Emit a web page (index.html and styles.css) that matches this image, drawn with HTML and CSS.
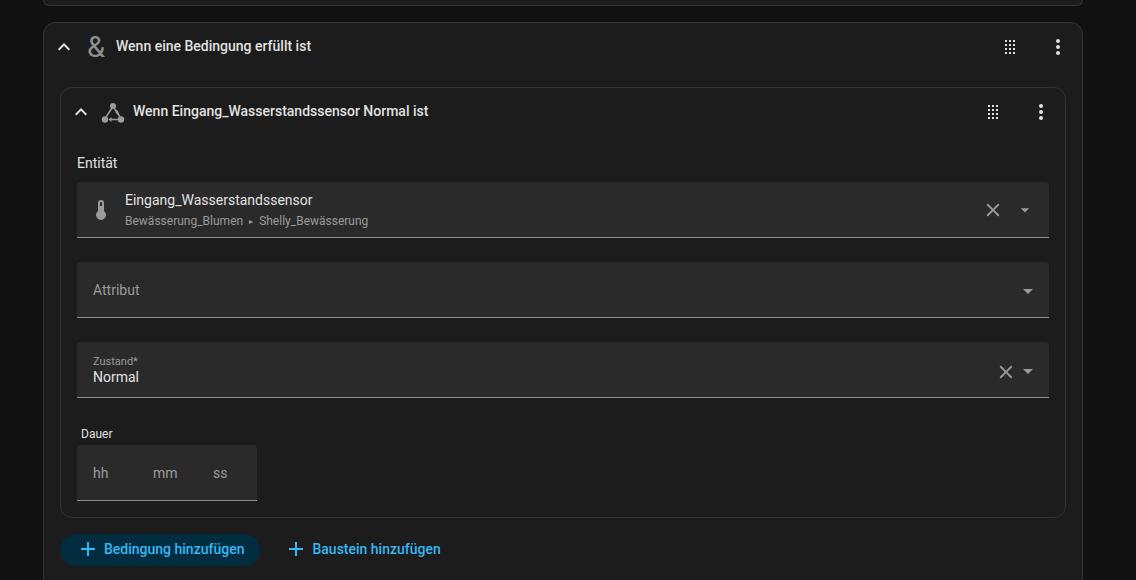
FILE: index.html
```html
<!DOCTYPE html>
<html lang="de">
<head>
<meta charset="utf-8">
<title>Bedingung</title>
<link rel="stylesheet" href="styles.css">
</head>
<body>
<main class="page">
  <div class="card card-stub"></div>
  <section class="card card-outer">
    <header class="head">
      <svg class="ico chev" viewBox="0 0 24 24"><path d="M7.41,15.41L12,10.83L16.59,15.41L18,14L12,8L6,14L7.41,15.41Z"/></svg>
      <span class="amp">&amp;</span>
      <h2 class="title">Wenn eine Bedingung erfüllt ist</h2>
      <svg class="ico drag" viewBox="0 0 24 24"><path d="M7,19V17H9V19H7M11,19V17H13V19H11M15,19V17H17V19H15M7,15V13H9V15H7M11,15V13H13V15H11M15,15V13H17V15H15M7,11V9H9V11H7M11,11V9H13V11H11M15,11V9H17V11H15M7,7V5H9V7H7M11,7V5H13V7H11M15,7V5H17V7H15Z"/></svg>
      <svg class="ico dots" viewBox="0 0 24 24"><path d="M12,16A2,2 0 0,1 14,18A2,2 0 0,1 12,20A2,2 0 0,1 10,18A2,2 0 0,1 12,16M12,10A2,2 0 0,1 14,12A2,2 0 0,1 12,14A2,2 0 0,1 10,12A2,2 0 0,1 12,10M12,4A2,2 0 0,1 14,6A2,2 0 0,1 12,8A2,2 0 0,1 10,6A2,2 0 0,1 12,4Z"/></svg>
    </header>
    <div class="outer-body">
      <section class="card card-inner">
        <header class="head head-inner">
          <svg class="ico chev" viewBox="0 0 24 24"><path d="M7.41,15.41L12,10.83L16.59,15.41L18,14L12,8L6,14L7.41,15.41Z"/></svg>
          <svg class="ico state" viewBox="0 0 24 24">
            <circle cx="12" cy="6" r="3"/><circle cx="4" cy="19.5" r="3.2"/><circle cx="20" cy="19.5" r="3.2"/>
            <path class="state-line" d="M11 8 5 17M13 8 19 17M8.5 19.5H17"/>
            <path d="M7.5 19.5 10.5 17V22ZM15 9.5 17 11 18.5 16 14.5 12.5Z"/>
          </svg>
          <h3 class="title">Wenn Eingang_Wasserstandssensor Normal ist</h3>
          <svg class="ico drag" viewBox="0 0 24 24"><path d="M7,19V17H9V19H7M11,19V17H13V19H11M15,19V17H17V19H15M7,15V13H9V15H7M11,15V13H13V15H11M15,15V13H17V15H15M7,11V9H9V11H7M11,11V9H13V11H11M15,11V9H17V11H15M7,7V5H9V7H7M11,7V5H13V7H11M15,7V5H17V7H15Z"/></svg>
          <svg class="ico dots" viewBox="0 0 24 24"><path d="M12,16A2,2 0 0,1 14,18A2,2 0 0,1 12,20A2,2 0 0,1 10,18A2,2 0 0,1 12,16M12,10A2,2 0 0,1 14,12A2,2 0 0,1 12,14A2,2 0 0,1 10,12A2,2 0 0,1 12,10M12,4A2,2 0 0,1 14,6A2,2 0 0,1 12,8A2,2 0 0,1 10,6A2,2 0 0,1 12,4Z"/></svg>
        </header>
        <div class="form">
          <div class="entity-label">Entität</div>
          <div class="field field-entity">
            <svg class="ico thermo" viewBox="0 0 24 24"><path d="M15 13V5A3 3 0 0 0 9 5V13A5 5 0 1 0 15 13M12 4A1 1 0 0 1 13 5V8H11V5A1 1 0 0 1 12 4Z"/></svg>
            <div class="entity-text">
              <div class="entity-name">Eingang_Wasserstandssensor</div>
              <div class="entity-path">Bewässerung_Blumen<span class="sep">▸</span>Shelly_Bewässerung</div>
            </div>
            <svg class="ico clear clear-entity" viewBox="0 0 24 24"><path d="M19,6.41L17.59,5L12,10.59L6.41,5L5,6.41L10.59,12L5,17.59L6.41,19L12,13.41L17.59,19L19,17.59L13.41,12L19,6.41Z"/></svg>
            <svg class="ico caret caret-small" viewBox="0 0 24 24"><path d="M7,10L12,15L17,10H7Z"/></svg>
          </div>
          <div class="field field-text">
            <span class="placeholder">Attribut</span>
            <svg class="ico caret caret-low" viewBox="0 0 24 24"><path d="M7,10L12,15L17,10H7Z"/></svg>
          </div>
          <div class="field field-text">
            <div class="value-wrap">
              <div class="float-label">Zustand*</div>
              <div class="value">Normal</div>
            </div>
            <svg class="ico clear clear-low" viewBox="0 0 24 24"><path d="M19,6.41L17.59,5L12,10.59L6.41,5L5,6.41L10.59,12L5,17.59L6.41,19L12,13.41L17.59,19L19,17.59L13.41,12L19,6.41Z"/></svg>
            <svg class="ico caret caret-low" viewBox="0 0 24 24"><path d="M7,10L12,15L17,10H7Z"/></svg>
          </div>
          <div class="dur-label">Dauer</div>
          <div class="duration">
            <span class="dur-h">hh</span><span class="dur-m">mm</span><span class="dur-s">ss</span>
          </div>
        </div>
      </section>
      <footer class="actions">
        <button class="btn btn-tonal"><svg class="ico plus" viewBox="0 0 24 24"><path d="M19,13H13V19H11V13H5V11H11V5H13V11H19V13Z"/></svg>Bedingung hinzufügen</button>
        <button class="btn"><svg class="ico plus" viewBox="0 0 24 24"><path d="M19,13H13V19H11V13H5V11H11V5H13V11H19V13Z"/></svg>Baustein hinzufügen</button>
      </footer>
    </div>
  </section>
</main>
</body>
</html>
```
FILE: styles.css
```css
* { box-sizing: border-box; }
html, body { margin: 0; height: 580px; overflow: hidden; }
body { background: #111111; font-family: Roboto, sans-serif; color: #e1e1e1; }
.page { width: 1040px; margin-left: 43px; height: 580px; overflow: hidden; }
.card { background: #1c1c1c; border: 1px solid #333333; border-radius: 12px; }
.card-stub { height: 6px; border-top: 0; border-radius: 0 0 12px 12px; margin-bottom: 16px; }
.card-outer { height: 600px; }
.ico { display: block; flex: none; width: 24px; height: 24px; fill: #e1e1e1; }
.head { display: flex; align-items: center; height: 48px; padding: 0 12px 0 8px; }
.head-inner { height: 48px; }
.title { margin: 0 0 2px; font-size: 14px; line-height: 20px; font-weight: 500; color: #e1e1e1; flex: 1; }
.chev { margin-right: 8px; }
.amp { width: 32px; margin: 0 4px 0 -4px; font-family: Roboto, sans-serif; font-size: 29px; font-weight: 400; line-height: 24px; color: #8f8f8f; text-align: center; }
.drag { margin-right: 24px; }
.outer-body { padding: 16px 16px 0; }
.card-inner { height: 431px; }
.state { margin-right: 8px; fill: #9b9b9b; }
.state-line { fill: none; stroke: #9b9b9b; stroke-width: 1.5; }
.form { padding: 16px 16px 0; }
.entity-label { height: 30px; padding-top: 1px; font-size: 14px; line-height: 20px; color: #e1e1e1; }
.field { display: flex; align-items: center; height: 56px; background: #2a2a2a; border-bottom: 1px solid #8f8f8f; border-radius: 4px 4px 0 0; margin-bottom: 24px; }
.field-entity { padding: 0 14px 0 12px; }
.field-text { padding: 0 9px 0 16px; }
.thermo { fill: #9b9b9b; margin-right: 12px; }
.entity-text { flex: 1; min-width: 0; padding-top: 2px; }
.entity-name { font-size: 14px; line-height: 20px; color: #e1e1e1; }
.entity-path { font-size: 12px; line-height: 20px; color: #9b9b9b; margin-top: 1px; }
.sep { font-size: 8px; margin: 0 6px; vertical-align: 1px; }
.clear { width: 22px; height: 22px; fill: #9b9b9b; }
.clear-entity { margin-right: 11px; }
.clear-low { margin-top: 4px; margin-right: -1px; }
.caret { fill: #9b9b9b; }
.caret-small { width: 20px; height: 20px; }
.caret-low { margin-top: 2px; }
.placeholder { flex: 1; font-size: 14px; color: #9b9b9b; }
.value-wrap { flex: 1; padding-top: 3px; }
.float-label { font-size: 11px; line-height: 12px; color: #9b9b9b; }
.value { font-size: 14px; line-height: 18px; color: #e1e1e1; }
.dur-label { height: 23px; margin-top: 12px; padding: 4px 0 0 4px; font-size: 12px; line-height: 16px; color: #e1e1e1; }
.duration { display: flex; align-items: center; width: 180px; height: 56px; background: #2a2a2a; border-bottom: 1px solid #8f8f8f; border-radius: 4px 4px 0 0; padding-left: 16px; font-size: 14px; color: #9b9b9b; }
.dur-h { width: 60px; }
.dur-m { width: 60px; }
.actions { display: flex; align-items: center; gap: 8px; margin-top: 16px; }
.btn { display: inline-flex; align-items: center; height: 32px; padding: 0 16px 2px; border: 0; border-radius: 16px; background: transparent; color: #35b9f3; font: 500 14px/20px Roboto, sans-serif; }
.btn-tonal { background: #022d41; }
.plus { fill: #35b9f3; margin-right: 4px; }
```
